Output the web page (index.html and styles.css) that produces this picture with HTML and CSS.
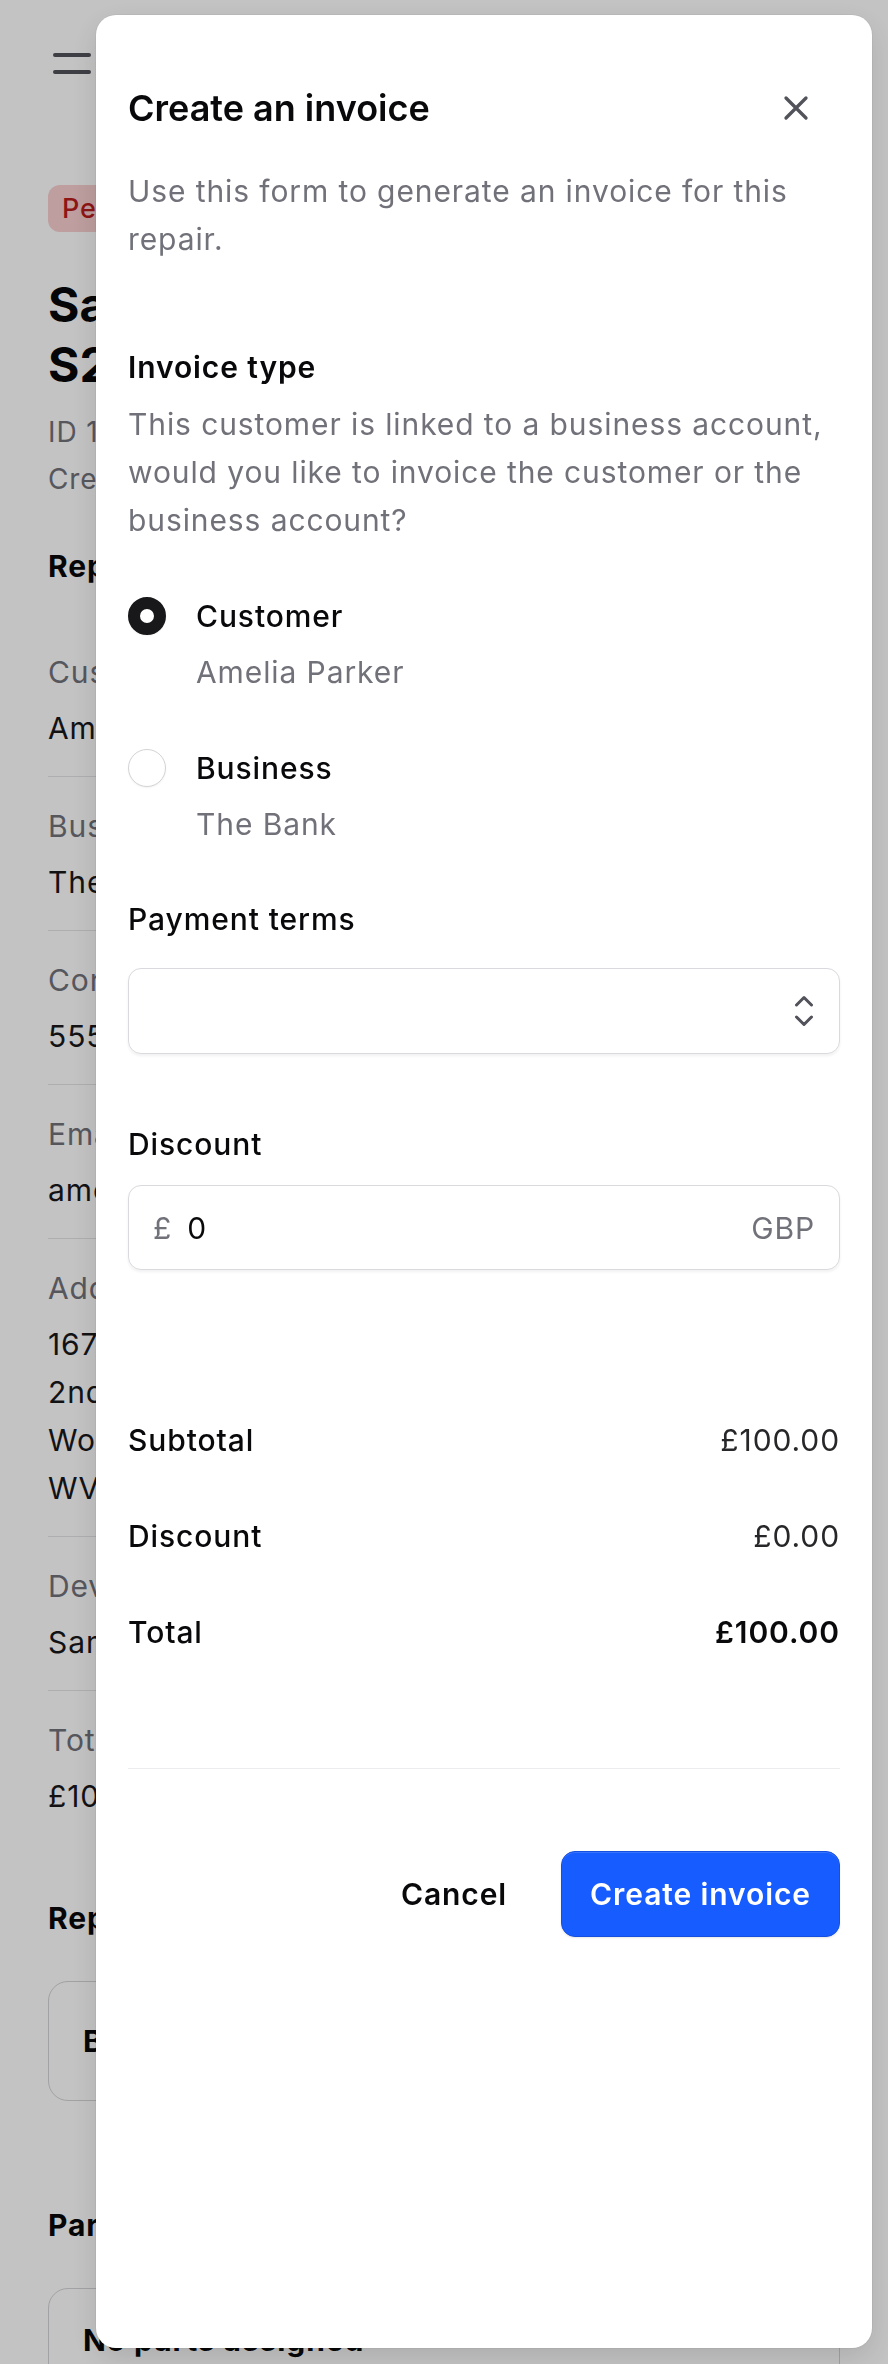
FILE: index.html
```html
<!DOCTYPE html>
<html lang="en">
<head>
<meta charset="utf-8">
<title>Create an invoice</title>
<link rel="stylesheet" href="styles.css">
</head>
<body>
<div class="page">
  <div class="hamburger"><i></i><i></i></div>
  <span class="badge">Pending</span>
  <h1 class="repair-title">Samsung Galaxy<br>S21 Ultra</h1>
  <p class="meta">ID 1042</p>
  <p class="meta meta-2">Created 12 March 2024</p>
  <h2 class="page-heading heading-details">Repair details</h2>
  <dl class="details">
    <div class="detail"><dt>Customer</dt><dd>Amelia Parker</dd></div>
    <div class="detail"><dt>Business</dt><dd>The Bank</dd></div>
    <div class="detail"><dt>Contact number</dt><dd>555-0142</dd></div>
    <div class="detail"><dt>Email</dt><dd>amelia.parker@example.com</dd></div>
    <div class="detail"><dt>Address</dt><dd>167 High Street<br>2nd Floor<br>Wolverhampton<br>WV1 1AA</dd></div>
    <div class="detail"><dt>Device</dt><dd>Samsung Galaxy S21 Ultra</dd></div>
    <div class="detail"><dt>Total</dt><dd>£100.00</dd></div>
  </dl>
  <h2 class="page-heading heading-items">Repair items</h2>
  <div class="card card-items"><span>Battery replacement</span></div>
  <h2 class="page-heading heading-parts">Parts</h2>
  <div class="card card-parts"><span>No parts assigned</span></div>
</div>

<div class="overlay"></div>

<div class="modal" role="dialog" aria-labelledby="modal-title">
  <div class="modal-header">
    <h2 id="modal-title" class="modal-title">Create an invoice</h2>
    <button class="close-btn" aria-label="Close">
      <svg viewBox="0 0 24 24" width="40" height="40" fill="none" stroke="#52525b" stroke-width="2" stroke-linecap="round"><path d="M6 6l12 12M18 6L6 18"/></svg>
    </button>
  </div>
  <p class="modal-desc">Use this form to generate an invoice for this repair.</p>

  <h3 class="field-heading invoice-type">Invoice type</h3>
  <p class="field-desc">This customer is linked to a business account, would you like to invoice the customer or the business account?</p>

  <div class="radio-group">
    <div class="option">
      <span class="radio radio-on"></span>
      <div class="option-text">
        <div class="option-label">Customer</div>
        <div class="option-sub">Amelia Parker</div>
      </div>
    </div>
    <div class="option option-2">
      <span class="radio"></span>
      <div class="option-text">
        <div class="option-label">Business</div>
        <div class="option-sub">The Bank</div>
      </div>
    </div>
  </div>

  <div class="field-label label-terms">Payment terms</div>
  <div class="select-box">
    <svg viewBox="0 0 24 24" width="48" height="48" fill="none" stroke="#52525b" stroke-width="1.5" stroke-linecap="round" stroke-linejoin="round"><path d="M8.25 15L12 18.75 15.75 15m-7.5-6L12 5.25 15.75 9"/></svg>
  </div>

  <div class="field-label label-discount">Discount</div>
  <div class="money-input">
    <span class="currency">£</span>
    <span class="amount">0</span>
    <span class="code">GBP</span>
  </div>

  <div class="summary">
    <div class="summary-row"><span class="s-label">Subtotal</span><span class="s-value">£100.00</span></div>
    <div class="summary-row"><span class="s-label">Discount</span><span class="s-value">£0.00</span></div>
    <div class="summary-row"><span class="s-label">Total</span><span class="s-value s-total">£100.00</span></div>
  </div>

  <div class="divider"></div>

  <div class="actions">
    <button class="btn btn-cancel">Cancel</button>
    <button class="btn btn-primary">Create invoice</button>
  </div>
</div>
</body>
</html>
```

FILE: styles.css
```css
* {
  box-sizing: border-box;
}

html, body {
  margin: 0;
  padding: 0;
  background: #ffffff;
}

body {
  font-family: "Inter", "Noto Sans", "Liberation Sans", sans-serif;
  color: #18181b;
  height: 2364px;
  overflow: hidden;
}

/* ---------- underlying page ---------- */
.page {
  padding: 53px 48px 0 48px;
  letter-spacing: 0.9px;
}

.hamburger {
  width: 38px;
  height: 21px;
  margin-left: 5px;
  display: flex;
  flex-direction: column;
  justify-content: space-between;
}

.hamburger i {
  display: block;
  height: 4px;
  border-radius: 2px;
  background: #52525b;
}

.badge {
  display: inline-block;
  margin-top: 111px;
  height: 47px;
  line-height: 47px;
  padding: 0 14px;
  border-radius: 12px;
  background: #f9cfcf;
  color: #b91c1c;
  font-size: 27px;
  font-weight: 500;
}

.repair-title {
  margin: 43px 0 0 0;
  font-size: 48px;
  line-height: 60px;
  font-weight: 700;
  color: #09090b;
  letter-spacing: 0;
}

.meta {
  margin: 14px 0 0 0;
  font-size: 28px;
  line-height: 47px;
  color: #71717a;
}

.meta-2 {
  margin-top: 0;
}

.page-heading {
  margin: 0;
  font-size: 30px;
  line-height: 48px;
  font-weight: 700;
  color: #09090b;
}

.heading-details { margin-top: 39px; }
.heading-items { margin-top: 50px; }
.heading-parts { margin-top: 100px; }

.details {
  margin: 33px 0 0 0;
}

.detail {
  padding: 25px 0 24px 0;
  border-bottom: 1px solid #e4e4e7;
}

.detail:last-child {
  border-bottom: none;
}

.detail dt {
  font-size: 30px;
  line-height: 48px;
  color: #71717a;
}

.detail dd {
  margin: 8px 0 0 0;
  font-size: 30px;
  line-height: 48px;
  color: #18181b;
}

.card {
  margin-top: 39px;
  border: 1.5px solid #d4d4d8;
  border-radius: 20px;
  padding: 35px 34px;
  font-size: 30px;
  line-height: 48px;
  font-weight: 700;
  color: #09090b;
}

.card-parts {
  padding-top: 27px;
  height: 200px;
}

/* ---------- overlay + modal ---------- */
.overlay {
  position: fixed;
  inset: 0;
  background: rgba(0, 0, 0, 0.235);
}

.modal {
  position: fixed;
  top: 15px;
  left: 96px;
  right: 16px;
  bottom: 16px;
  background: #ffffff;
  border-radius: 20px;
  padding: 0 32px;
  box-shadow: 0 10px 30px rgba(0, 0, 0, 0.12), 0 0 0 1px rgba(0, 0, 0, 0.04);
  color: #09090b;
  letter-spacing: 0.9px;
}

.modal-header {
  margin-top: 69px;
  display: flex;
  align-items: center;
  justify-content: space-between;
}

.modal-title {
  margin: 0;
  font-size: 36px;
  line-height: 48px;
  font-weight: 600;
  color: #09090b;
  letter-spacing: 0;
}

.close-btn {
  width: 48px;
  height: 48px;
  margin-right: 20px;
  padding: 0;
  border: none;
  background: transparent;
  display: flex;
  align-items: center;
  justify-content: center;
}

.modal-desc {
  margin: 35px 0 0 0;
  font-size: 30px;
  line-height: 48px;
  color: #71717a;
}

.field-heading {
  margin: 80px 0 0 0;
  font-size: 30px;
  line-height: 48px;
  font-weight: 600;
  color: #09090b;
}

.field-desc {
  margin: 9px 0 0 0;
  font-size: 30px;
  line-height: 48px;
  color: #71717a;
}

.radio-group {
  margin-top: 48px;
}

.option {
  display: flex;
  align-items: flex-start;
}

.option-2 {
  margin-top: 48px;
}

.radio {
  flex: none;
  width: 38px;
  height: 38px;
  margin-top: 5px;
  margin-right: 30px;
  border-radius: 50%;
  border: 1.5px solid #d4d4d8;
  background: #ffffff;
  box-shadow: 0 1px 2px rgba(0, 0, 0, 0.05);
}

.radio-on {
  border: 12px solid #18181b;
  background: #ffffff;
}

.option-label {
  font-size: 30px;
  line-height: 48px;
  font-weight: 500;
  color: #09090b;
}

.option-sub {
  margin-top: 8px;
  font-size: 30px;
  line-height: 48px;
  color: #71717a;
}

.field-label {
  font-size: 30px;
  line-height: 48px;
  font-weight: 500;
  color: #09090b;
}

.label-terms { margin-top: 47px; }
.label-discount { margin-top: 66px; }

.select-box {
  margin-top: 25px;
  height: 86px;
  border: 1.5px solid #d9d9de;
  border-radius: 13px;
  box-shadow: 0 2px 3px rgba(0, 0, 0, 0.06);
  display: flex;
  align-items: center;
  justify-content: flex-end;
  padding-right: 11px;
}

.money-input {
  margin-top: 17px;
  height: 85px;
  border: 1.5px solid #d9d9de;
  border-radius: 13px;
  box-shadow: 0 2px 3px rgba(0, 0, 0, 0.06);
  display: flex;
  align-items: center;
  padding: 0 24px;
  font-size: 30px;
  line-height: 48px;
}

.currency {
  color: #71717a;
  margin-right: 15px;
}

.amount {
  color: #09090b;
  flex: 1;
}

.code {
  color: #71717a;
}

.summary {
  margin-top: 146px;
  display: flex;
  flex-direction: column;
  gap: 48px;
}

.summary-row {
  display: flex;
  justify-content: space-between;
  font-size: 30px;
  line-height: 48px;
}

.s-label {
  font-weight: 500;
  color: #09090b;
}

.s-value {
  color: #27272a;
}

.s-total {
  font-weight: 600;
  color: #09090b;
}

.divider {
  margin-top: 112px;
  height: 1px;
  background: #ececef;
}

.actions {
  margin-top: 82px;
  display: flex;
  justify-content: flex-end;
  gap: 26px;
}

.btn {
  height: 86px;
  padding: 0 28px;
  border-radius: 14px;
  font-family: inherit;
  font-size: 30px;
  font-weight: 600;
  letter-spacing: 0.9px;
  border: none;
  cursor: pointer;
}

.btn-cancel {
  background: transparent;
  color: #09090b;
}

.btn-primary {
  background: #175cff;
  color: #ffffff;
  border: 1px solid #1450e0;
  box-shadow: inset 0 1px 0 rgba(255, 255, 255, 0.15), 0 1px 2px rgba(0, 0, 0, 0.1);
}
```
